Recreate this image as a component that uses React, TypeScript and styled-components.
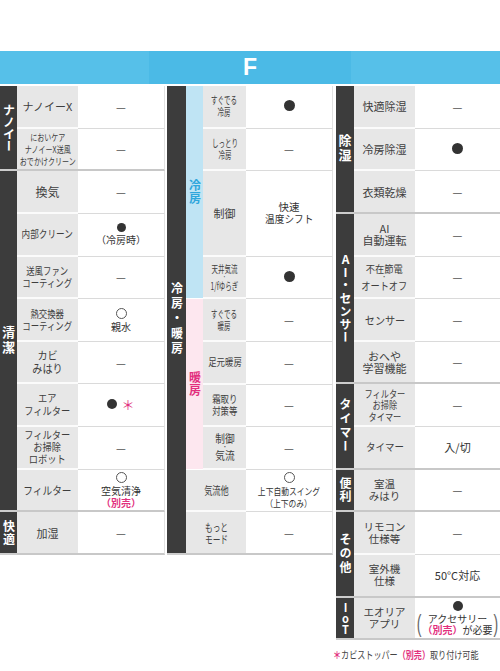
import React, { FC, ReactNode } from 'react';
import styled, { createGlobalStyle } from 'styled-components';

const H = 42.65;
const PINK = '#e2307e';

const GlobalStyle = createGlobalStyle`
  html, body { margin: 0; padding: 0; background: #fff; }
  body {
    font-family: "Noto Sans CJK JP", "Noto Sans", sans-serif;
    color: #333;
  }
`;

const Page = styled.div`
  width: 500px;
  height: 671px;
  overflow: hidden;
  padding-top: 51px;
  box-sizing: border-box;
  background: #fff;
`;

const Header = styled.header`
  height: 33px;
  background: #56c0e9;
  display: flex;
  justify-content: center;
`;

const HeaderTitle = styled.div`
  width: 202px;
  background: #4bbae6;
  color: #fff;
  font-family: "Liberation Sans", Arial, sans-serif;
  font-weight: 700;
  font-size: 23px;
  display: flex;
  align-items: center;
  justify-content: center;
`;

const Table = styled.div`
  display: flex;
  align-items: flex-start;
  margin-top: 2px;
`;

const Column = styled.div<{ $w: number; $gap?: number }>`
  flex: none;
  width: ${p => p.$w}px;
  margin-right: ${p => p.$gap ?? 0}px;
  display: flex;
  flex-direction: column;
`;

const Group = styled.div`
  display: flex;
`;

const Bar = styled.div<{ $w: number }>`
  flex: none;
  box-sizing: border-box;
  width: ${p => p.$w}px;
  background: #3c3c3c;
  border-bottom: 2px solid #cdcdcd;
  color: #fff;
  font-weight: 700;
  display: flex;
  align-items: center;
  justify-content: center;
`;

const Vertical = styled.span<{ $size?: number; $ls?: number }>`
  writing-mode: vertical-rl;
  text-orientation: upright;
  font-size: ${p => p.$size ?? 12}px;
  letter-spacing: ${p => p.$ls ?? 1}px;
  line-height: 1;
`;

const SubBar = styled.div<{ $tone: 'cool' | 'warm' }>`
  flex: none;
  box-sizing: border-box;
  width: 17px;
  background: ${p => (p.$tone === 'cool' ? '#bfe4f4' : '#fde7ef')};
  color: ${p => (p.$tone === 'cool' ? '#2fa6dc' : PINK)};
  border-bottom: 1px solid #fff;
  font-weight: 700;
  display: flex;
  align-items: center;
  justify-content: center;
`;

const Rows = styled.div`
  flex: 1;
  min-width: 0;
  display: flex;
  flex-direction: column;
`;

const Row = styled.div<{ $span?: number }>`
  display: flex;
  height: ${p => (p.$span ?? 1) * H}px;
`;

const Label = styled.div<{ $w: number; $last?: boolean; $size?: number; $lh?: number }>`
  flex: none;
  box-sizing: border-box;
  width: ${p => p.$w}px;
  background: #e7e7e7;
  border-bottom: 2px solid ${p => (p.$last ? '#c8c8c8' : '#fbfbfb')};
  display: flex;
  flex-direction: column;
  align-items: center;
  justify-content: center;
  font-size: ${p => p.$size ?? 10.5}px;
  line-height: ${p => p.$lh ?? 12}px;
  color: #3e3e3e;
  text-align: center;
  white-space: nowrap;
`;

const LabelText = styled.span<{ $sx?: number }>`
  display: block;
  transform: scaleX(${p => p.$sx ?? 1});
`;

const DotLine = styled.span`
  display: block;
  font-size: 6px;
  line-height: 6px;
`;

const Value = styled.div<{ $last?: boolean; $edge?: boolean }>`
  flex: 1;
  box-sizing: border-box;
  background: #fff;
  border-bottom: ${p => (p.$last ? '2px solid #c8c8c8' : '1px solid #dadada')};
  border-right: ${p => (p.$edge ? '1px solid #e2e2e2' : 'none')};
  display: flex;
  flex-direction: column;
  align-items: center;
  justify-content: center;
  font-size: 10px;
  line-height: 12px;
  color: #333;
  text-align: center;
  white-space: nowrap;
`;

const ValueText = styled.span<{ $size?: number; $sx?: number }>`
  display: block;
  font-size: ${p => p.$size ?? 10}px;
  transform: scaleX(${p => p.$sx ?? 1});
`;

const Dash = styled.span`
  font-size: 11px;
  color: #555;
`;

const Dot = styled.span<{ $size?: number; $open?: boolean }>`
  display: inline-block;
  box-sizing: border-box;
  width: ${p => p.$size ?? 10}px;
  height: ${p => p.$size ?? 10}px;
  border-radius: 50%;
  background: ${p => (p.$open ? 'transparent' : '#333')};
  border: ${p => (p.$open ? '1px solid #555' : 'none')};
  margin-bottom: 2px;
`;

const MarkRow = styled.div`
  display: flex;
  align-items: center;
  gap: 4px;
`;

const Pink = styled.span`
  color: ${PINK};
  font-weight: 700;
`;

const Asterisk = styled.span`
  color: ${PINK};
  font-size: 13px;
  line-height: 1;
  margin-bottom: 2px;
`;

const Bracketed = styled.div`
  display: flex;
  align-items: center;
  gap: 1px;
  font-size: 10px;
  line-height: 11px;
`;

const Paren = styled.span`
  font-family: "Liberation Sans", Arial, sans-serif;
  font-size: 14px;
  line-height: 14px;
  color: #666;
  transform: scaleY(1.65);
`;

const Note = styled.p`
  margin: 8px 0 0 333px;
  font-size: 10.5px;
  line-height: 13px;
  color: #444;
  white-space: nowrap;
  transform: scaleX(0.77);
  transform-origin: left center;
`;

type RowProps = {
  label: ReactNode;
  value: ReactNode;
  lw: number;
  span?: number;
  last?: boolean;
  size?: number;
  sx?: number;
  lh?: number;
  edge?: boolean;
};

const SpecRow: FC<RowProps> = ({ label, value, lw, span, last, size, sx, lh, edge }) => (
  <Row $span={span}>
    <Label $w={lw} $last={last} $size={size} $lh={lh}>
      <LabelText $sx={sx}>{label}</LabelText>
    </Label>
    <Value $last={last} $edge={edge}>{value}</Value>
  </Row>
);

const dash = <Dash>—</Dash>;

const App: FC = () => (
  <Page>
    <GlobalStyle />
    <Header>
      <HeaderTitle>F</HeaderTitle>
    </Header>
    <Table>
      <Column $w={165} $gap={2}>
        <Group>
          <Bar $w={17}><Vertical $size={12} $ls={0}>ナノイー</Vertical></Bar>
          <Rows>
            <SpecRow lw={61} edge label="ナノイーX" size={11} value={dash} />
            <SpecRow lw={61} edge last size={9.5} sx={0.74} label={<>においケア<br />ナノイーX送風<br />おでかけクリーン</>} value={dash} />
          </Rows>
        </Group>
        <Group>
          <Bar $w={17}><Vertical $size={13} $ls={2}>清潔</Vertical></Bar>
          <Rows>
            <SpecRow lw={61} edge label="換気" size={12} value={dash} />
            <SpecRow lw={61} edge label="内部クリーン" size={10.5} sx={0.82} value={<><Dot $size={9} /><ValueText>（冷房時）</ValueText></>} />
            <SpecRow lw={61} edge size={10.5} sx={0.8} lh={12} label={<>送風ファン<br />コーティング</>} value={dash} />
            <SpecRow lw={61} edge size={10.5} sx={0.8} lh={12} label={<>熱交換器<br />コーティング</>} value={<><Dot $open $size={11} /><ValueText>親水</ValueText></>} />
            <SpecRow lw={61} edge size={11} sx={0.92} lh={13} label={<>カビ<br />みはり</>} value={dash} />
            <SpecRow lw={61} edge size={10.5} sx={0.88} lh={12.5} label={<>エア<br />フィルター</>} value={<MarkRow><Dot $size={10} /><Asterisk>＊</Asterisk></MarkRow>} />
            <SpecRow lw={61} edge size={10.5} sx={0.88} label={<>フィルター<br />お掃除<br />ロボット</>} value={dash} />
            <SpecRow lw={61} edge last size={11} sx={0.88} label="フィルター" value={<><Dot $open $size={11} /><ValueText>空気清浄</ValueText><ValueText><Pink>（別売）</Pink></ValueText></>} />
          </Rows>
        </Group>
        <Group>
          <Bar $w={17}><Vertical $size={12} $ls={1}>快適</Vertical></Bar>
          <Rows>
            <SpecRow lw={61} edge last label="加湿" size={11} value={dash} />
          </Rows>
        </Group>
      </Column>

      <Column $w={166} $gap={3}>
        <Group>
          <Bar $w={19}><Vertical $size={12} $ls={3}>冷房・暖房</Vertical></Bar>
          <Rows>
            <Group>
              <SubBar $tone="cool"><Vertical $size={12} $ls={1}>冷房</Vertical></SubBar>
              <Rows>
                <SpecRow lw={43} edge size={10.5} sx={0.62} label={<>すぐでる<br />冷房</>} value={<Dot $size={11} />} />
                <SpecRow lw={43} edge size={10.5} sx={0.62} label={<>しっとり<br />冷房</>} value={dash} />
                <SpecRow lw={43} edge span={2} size={11} label="制御" value={<><ValueText $size={10.5}>快速</ValueText><ValueText $size={10.5} $sx={0.92}>温度シフト</ValueText></>} />
                <SpecRow lw={43} edge size={10.5} sx={0.62} lh={11} label={<>天井気流<DotLine>・</DotLine>1/fゆらぎ</>} value={<Dot $size={11} />} />
              </Rows>
            </Group>
            <Group>
              <SubBar $tone="warm"><Vertical $size={12} $ls={1}>暖房</Vertical></SubBar>
              <Rows>
                <SpecRow lw={43} edge size={10.5} sx={0.62} label={<>すぐでる<br />暖房</>} value={dash} />
                <SpecRow lw={43} edge size={10.5} sx={0.8} label="足元暖房" value={dash} />
                <SpecRow lw={43} edge size={10.5} sx={0.8} label={<>霜取り<br />対策等</>} value={dash} />
                <SpecRow lw={43} edge size={11} sx={0.88} lh={11} label={<>制御<DotLine>・</DotLine>気流</>} value={dash} />
              </Rows>
            </Group>
            <SpecRow lw={60} edge size={11} sx={0.75} label="気流他" value={<><Dot $open $size={11} /><ValueText $size={9.5} $sx={0.82}>上下自動スイング</ValueText><ValueText $size={9.5} $sx={0.82}>（上下のみ）</ValueText></>} />
            <SpecRow lw={60} edge last size={11} sx={0.7} label={<>もっと<br />モード</>} value={dash} />
          </Rows>
        </Group>
      </Column>

      <Column $w={164}>
        <Group>
          <Bar $w={18}><Vertical $size={13} $ls={2}>除湿</Vertical></Bar>
          <Rows>
            <SpecRow lw={61} size={11} label="快適除湿" value={dash} />
            <SpecRow lw={61} size={11} label="冷房除湿" value={<Dot $size={11} />} />
            <SpecRow lw={61} size={11} last label="衣類乾燥" value={dash} />
          </Rows>
        </Group>
        <Group>
          <Bar $w={18}><Vertical $size={12} $ls={1}>AI・センサー</Vertical></Bar>
          <Rows>
            <SpecRow lw={61} size={11} lh={12} label={<>AI<br />自動運転</>} value={dash} />
            <SpecRow lw={61} size={10.5} sx={0.88} lh={11} label={<>不在節電<DotLine>・</DotLine>オートオフ</>} value={dash} />
            <SpecRow lw={61} size={11} sx={0.92} label="センサー" value={dash} />
            <SpecRow lw={61} size={11} last label={<>おへや<br />学習機能</>} value={dash} />
          </Rows>
        </Group>
        <Group>
          <Bar $w={18}><Vertical $size={12} $ls={2}>タイマー</Vertical></Bar>
          <Rows>
            <SpecRow lw={61} size={10} sx={0.82} lh={11.5} label={<>フィルター<br />お掃除<br />タイマー</>} value={dash} />
            <SpecRow lw={61} size={10.5} sx={0.9} last label="タイマー" value={<ValueText $size={11}>入/切</ValueText>} />
          </Rows>
        </Group>
        <Group>
          <Bar $w={18}><Vertical $size={12} $ls={1}>便利</Vertical></Bar>
          <Rows>
            <SpecRow lw={61} size={10.5} last label={<>室温<br />みはり</>} value={dash} />
          </Rows>
        </Group>
        <Group>
          <Bar $w={18}><Vertical $size={12} $ls={2}>その他</Vertical></Bar>
          <Rows>
            <SpecRow lw={61} size={10.5} label={<>リモコン<br />仕様等</>} value={dash} />
            <SpecRow lw={61} size={10.5} last label={<>室外機<br />仕様</>} value={<ValueText $size={11}>50°C対応</ValueText>} />
          </Rows>
        </Group>
        <Group>
          <Bar $w={18}><Vertical $size={11} $ls={0}>IoT</Vertical></Bar>
          <Rows>
            <SpecRow lw={61} size={10.5} last label={<>エオリア<br />アプリ</>} value={<>
              <Dot $size={10} />
              <Bracketed>
                <Paren>(</Paren>
                <div>アクセサリー<br /><Pink>（別売）</Pink>が必要</div>
                <Paren>)</Paren>
              </Bracketed>
            </>} />
          </Rows>
        </Group>
      </Column>
    </Table>
    <Note><Pink>＊</Pink>カビストッパー<Pink>（別売）</Pink>取り付け可能</Note>
  </Page>
);

export default App;
